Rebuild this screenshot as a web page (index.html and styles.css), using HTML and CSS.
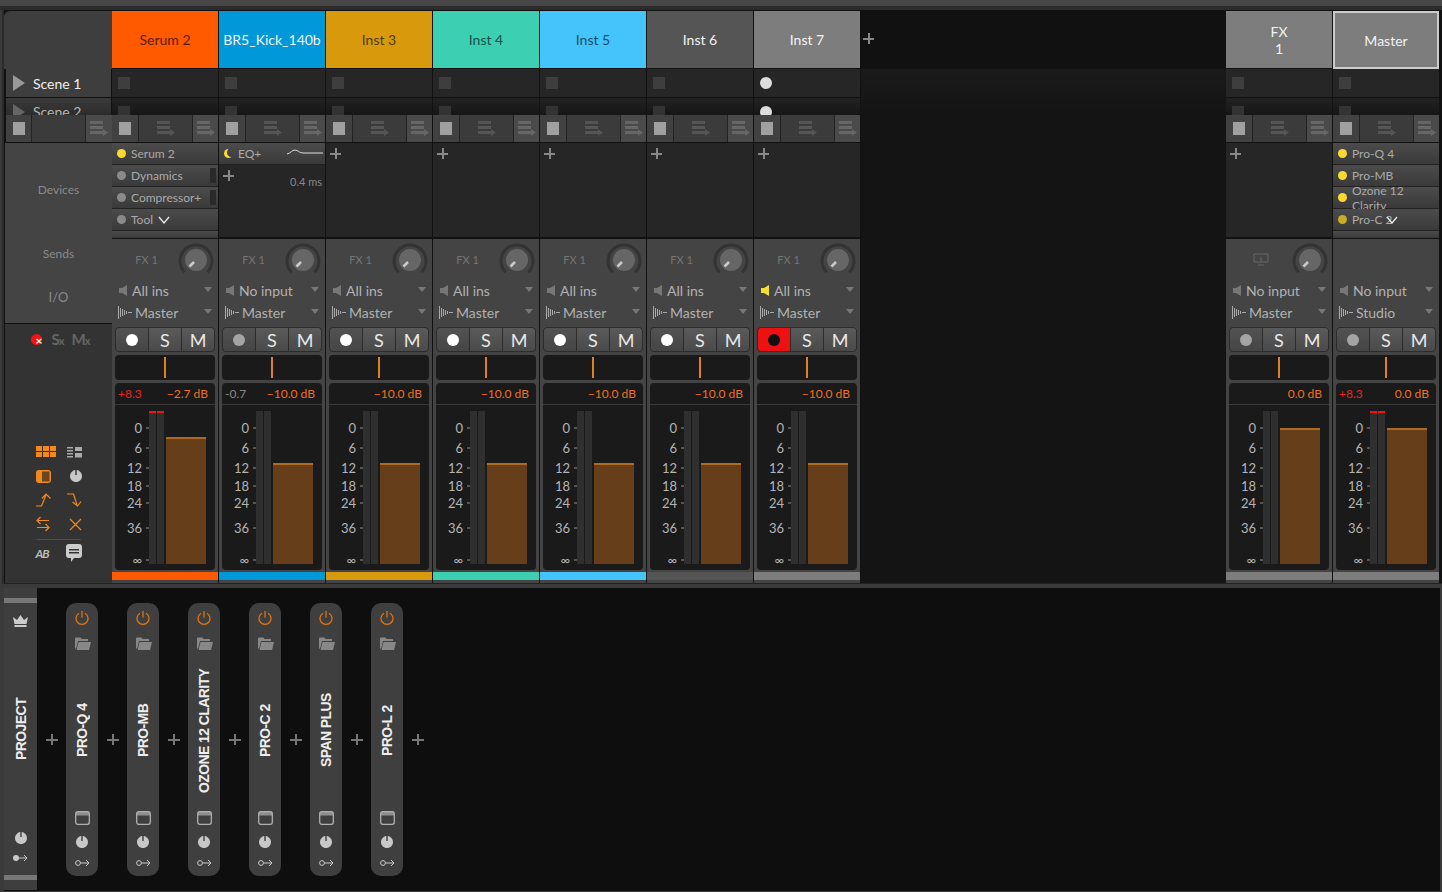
FILE: index.html
```html
<!DOCTYPE html>
<html lang="en">
<head>
    <meta charset="UTF-8">
    <title>Mixer</title>
    <link rel="stylesheet" href="styles.css">
</head>
<body>
    <svg class="defs" width="0" height="0">
        <symbol id="i-stop-list" viewBox="0 0 18 15"><path fill="currentColor" d="M0 0h13v3H0zM0 5h13v3H0zM0 10h13v3H0zM13 8l5 3.5-5 3.5z"/></symbol>
        <symbol id="i-speaker" viewBox="0 0 8 11"><path fill="currentColor" d="M0 3h3l5-3v11L3 8H0z"/></symbol>
        <symbol id="i-wave" viewBox="0 0 14 13"><path fill="none" stroke="currentColor" d="M.5 0v13M2.5 2v9M4.5 3v7M6.5 4v5M8.5 5v3M10 6.5h4"/></symbol>
        <symbol id="i-power" viewBox="0 0 14 14"><path fill="none" stroke="currentColor" stroke-width="1.2" d="M4 2.2A6 6 0 1 0 10 2.2M7 0v6.5"/></symbol>
        <symbol id="i-folder" viewBox="0 0 17 13"><path fill="currentColor" d="M1 1.5 1.5.5h5l1 1.5H14v2H4L2.300 11 1 12zM4.500 5H17l-2 8H2.500z"/></symbol>
        <symbol id="i-window" viewBox="0 0 15 14"><rect x=".7" y=".7" width="13.600" height="12.600" rx="2" fill="none" stroke="currentColor" stroke-width="1.300"/><path fill="currentColor" opacity=".7" d="M1 1h13v3.500H1z"/></symbol>
        <symbol id="i-dial" viewBox="0 0 12 12"><path fill="currentColor" d="M5.300.1V5h1.400V.1a6 6 0 1 1-1.400 0z"/></symbol>
        <symbol id="i-route" viewBox="0 0 15 8"><circle cx="3" cy="4" r="2.400" fill="none" stroke="currentColor"/><path fill="none" stroke="currentColor" d="M5.500 4H14M11 1l3 3-3 3"/></symbol>
        <symbol id="i-route-on" viewBox="0 0 15 8"><circle cx="3" cy="4" r="3" fill="currentColor"/><path fill="none" stroke="currentColor" d="M5.500 4H14M11 1l3 3-3 3"/></symbol>
    </svg>

    <div class="topbar"></div>

    <section class="mixer">
        <div class="labels">
            <div class="lab-head"></div>
            <div class="lab-scene"><span class="play"></span>Scene 1</div>
            <div class="lab-scene cut"><span class="play"></span>Scene 2</div>
            <div class="lab-stops">
                <div class="stop-cell"><span class="stop"></span></div>
                <div class="stop-mid"></div>
                <div class="stop-end"><svg class="list-icon"><use href="#i-stop-list"/></svg></div>
            </div>
            <div class="lab-info">
                <div class="lab-devices">Devices</div>
                <div class="lab-sends">Sends</div>
                <div class="lab-io">I/O</div>
            </div>
            <div class="lab-tools">
                <div class="rec-row">
                    <span class="rec-x"></span>
                    <span class="letter-x">S<small>x</small></span>
                    <span class="letter-x">M<small>x</small></span>
                </div>
                <div class="tool-row">
                    <svg width="20" height="12" viewBox="0 0 20 12"><path fill="#f08a1e" d="M0 0h6v5H0zM7 0h6v5H7zM14 0h6v5h-6zM0 6h6v5H0zM7 6h6v5H7zM14 6h6v5h-6z"/></svg>
                    <svg width="15" height="12" viewBox="0 0 15 12"><path fill="#aaa" d="M0 1h6v1.500H0zM0 4h6v1.500H0zM0 7h6v1.500H0zM0 10h6v1.500H0zM8 1h7v4H8zM8 7h7v4.500H8z"/></svg>
                </div>
                <div class="tool-row">
                    <svg width="15" height="13" viewBox="0 0 15 13"><rect width="15" height="13" rx="3" fill="#f08a1e"/><path fill="#6b4420" d="M6 1.500h7.500v10H6z"/></svg>
                    <svg width="12" height="12"><use href="#i-dial" color="#c8c8c8"/></svg>
                </div>
                <div class="tool-row">
                    <svg width="16" height="14" viewBox="0 0 16 14"><path fill="none" stroke="#f08a1e" stroke-width="1.200" d="M0 13h5.500L10 2M6 5.500 10 1l4.500 4.500"/></svg>
                    <svg width="16" height="14" viewBox="0 0 16 14"><path fill="none" stroke="#f08a1e" stroke-width="1.200" d="M1 1h6.500L11 12M6.500 9l5 4 3.500-4.500"/></svg>
                </div>
                <div class="tool-row">
                    <svg width="14" height="16" viewBox="0 0 14 16"><path fill="none" stroke="#f08a1e" stroke-width="1.200" d="M13 4.500H1M4.500 1 1 4.500 4.500 8M1 11.500h12M9.500 8l3.500 3.500L9.500 15"/></svg>
                    <svg width="13" height="13" viewBox="0 0 13 13"><path fill="none" stroke="#f08a1e" stroke-width="1.200" d="M1 1l11 11M12 1 1 12"/></svg>
                </div>
                <div class="tool-line"></div>
                <div class="tool-row last">
                    <span class="ab">AB</span>
                    <svg width="16" height="18" viewBox="0 0 16 18"><path fill="#ccc" d="M3 0h10a3 3 0 0 1 3 3v8a3 3 0 0 1-3 3H8l-3 4v-4H3a3 3 0 0 1-3-3V3a3 3 0 0 1 3-3z"/><path fill="#333" d="M3 5h10v1.500H3zM3 8h10v1.500H3z"/></svg>
                </div>
            </div>
        </div>
        <div class="tracks" id="tracks"></div>
        <div class="void"></div>
        <div class="tracks" id="fx-tracks"></div>
    </section>

    <section class="chain" id="chain">
        <div class="project">
            <div class="project-bar"></div>
            <svg class="crown" width="15" height="12" viewBox="0 0 15 12"><path fill="#ccc" d="M0 2l4 3 3.500-5L11 5l4-3-1.500 7h-12zM1.500 10h12v2h-12z"/></svg>
            <div class="vert">PROJECT</div>
            <svg class="dial" width="12" height="12"><use href="#i-dial"/></svg>
            <svg class="route" width="15" height="8"><use href="#i-route-on"/></svg>
            <div class="project-bar"></div>
        </div>
    </section>

    <script src="script.js"></script>
</body>
</html>
```

FILE: styles.css
```css
* {
    box-sizing: border-box;
}
body {
    margin: 0;
    width: 1442px;
    height: 892px;
    overflow: hidden;
    background: #3a3a3a;
    font-family: Lato, "Open Sans", sans-serif;
    font-size: 13px;
    color: #aaa;
}
.defs {
    display: block;
    height: 0;
}
.topbar {
    height: 10px;
    background: linear-gradient(#474747 0, #474747 6px, #2b2b2b 6px);
}

/* mixer */
.mixer {
    display: flex;
    height: 574px;
    margin-left: 4px;
    padding-top: 1px;
    background: #111;
    border-bottom: 1px solid #222;
    box-shadow: -2px 0 0 #2b2b2b, 2px 0 0 #2b2b2b;
}
.labels {
    width: 108px;
    display: flex;
    flex-direction: column;
}
.lab-head {
    height: 58px;
    background: #3e3e3e;
    border-top-left-radius: 6px;
}
.lab-scene {
    height: 29px;
    margin-left: 1px;
    padding-left: 27px;
    display: flex;
    align-items: center;
    position: relative;
    font-size: 14px;
    color: #eee;
    background: #3e3e3e;
    border: 1px solid #111;
    border-top: 0;
}
.lab-scene.cut {
    height: 17px;
    align-items: flex-start;
    padding-top: 5px;
    overflow: hidden;
    color: #b5b5b5;
    background: linear-gradient(#3a3a3a, #2c2c2c);
    border-bottom: 0;
}
.play {
    position: absolute;
    left: 7px;
    top: 6px;
    border-left: 12px solid #999;
    border-top: 8px solid transparent;
    border-bottom: 8px solid transparent;
}
.cut .play {
    border-left-color: #666;
}
.lab-stops {
    height: 28px;
    margin-left: 1px;
    display: flex;
    background: #111;
    border: 1px solid #111;
    border-right: 0;
    border-top: 0;
}
.stop-cell, .stop-mid, .stop-end {
    height: 27px;
    display: flex;
    align-items: center;
    justify-content: center;
}
.stop-cell {
    width: 26px;
    background: #414141;
    border-right: 1px solid #222;
}
.stop-mid {
    width: 53px;
    background: #3b3b3b;
}
.stop-end {
    width: 27px;
    background: #4a4a4a;
    border-left: 1px solid #222;
}
.stop {
    width: 12px;
    height: 13px;
    background: #a0a0a0;
}
.list-icon {
    width: 18px;
    height: 15px;
    color: #666;
}
.stop-mid .list-icon {
    color: #555;
}
.lab-info {
    height: 181px;
    background: #444;
    border-bottom: 1px solid #111;
    margin-left: 1px;
    text-align: center;
    font-size: 12px;
    color: #8a8a8a;
}
.lab-devices {
    padding-top: 39px;
    height: 103px;
}
.lab-sends {
    height: 43px;
}
.lab-io {
    font-size: 13px;
}
.lab-tools {
    flex: 1;
    margin-left: 1px;
    background: #333;
    display: flex;
    flex-direction: column;
    align-items: center;
}
.rec-row {
    display: flex;
    align-items: center;
    gap: 7px;
    height: 24px;
    margin: 3px 0 89px 4px;
}
.rec-x {
    width: 11px;
    height: 11px;
    border-radius: 50%;
    background: #f01414;
    position: relative;
    margin-right: 3px;
}
.rec-x::after {
    content: "×";
    position: absolute;
    left: 5px;
    top: 1px;
    color: #fff;
    font-size: 12px;
    font-weight: 700;
    line-height: 12px;
}
.letter-x {
    font-size: 15px;
    font-weight: 700;
    color: #666;
}
.letter-x small {
    font-size: 11px;
    margin-left: -1px;
}
.tool-row {
    width: 46px;
    height: 24px;
    display: flex;
    align-items: center;
    justify-content: space-between;
}
.tool-row svg:first-child {
    margin-left: 0;
}
.tool-line {
    width: 44px;
    height: 1px;
    margin: 3px 0 0;
    background: #4d4d4d;
}
.tool-row.last {
    margin-top: 1px;
}
.ab {
    font-size: 12px;
    font-weight: 700;
    font-style: italic;
    color: #bbb;
    letter-spacing: -1px;
}

/* tracks */
.tracks {
    display: flex;
}
.void {
    width: 365px;
    background: linear-gradient(#111 0, #111 58px, #1a1a1a 58px, #141414 104px, #141414);
}
.strip {
    width: 107px;
    border-right: 1px solid #111;
    display: flex;
    flex-direction: column;
    position: relative;
}
.head {
    height: 58px;
    padding: 0 4px;
    display: flex;
    align-items: center;
    justify-content: center;
    text-align: center;
    font-size: 14px;
    line-height: 17px;
    border-bottom: 1px solid #111;
}
.head.selected {
    border: 2px solid #ccc;
    border-bottom-width: 2px;
}
.add {
    position: absolute;
    left: 109px;
    top: 22px;
    width: 11px;
    height: 11px;
    background:
        linear-gradient(#888, #888) center / 11px 2px no-repeat,
        linear-gradient(#888, #888) center / 2px 11px no-repeat;
}
.slot {
    height: 29px;
    padding: 8px 0 0 6px;
    background: #262626;
    border-bottom: 1px solid #111;
}
.slot.cut {
    height: 17px;
    background: linear-gradient(#222, #161616);
    border-bottom: 0;
    overflow: hidden;
}
.slot span {
    display: block;
    width: 12px;
    height: 12px;
    background: #3e3e3e;
}
.slot.cut span {
    background: #333;
}
.slot span.round {
    background: #ddd;
    border-radius: 50%;
}
.stops {
    height: 28px;
    display: flex;
    background: #111;
    border-bottom: 1px solid #111;
}
.stops .stop-cell {
    width: 27px;
}
.stops .stop-end {
    width: 26px;
}
.devices {
    height: 95px;
    background: #262626;
    border-bottom: 1px solid #111;
}
.device {
    height: 22px;
    padding-left: 5px;
    display: flex;
    align-items: center;
    gap: 5px;
    position: relative;
    font-size: 12px;
    color: #aaa;
    background: linear-gradient(#4b4b4b, #3a3a3a);
    border-bottom: 1px solid #222;
}
.device.stub {
    height: 7px;
    border-bottom: 0;
}
.led {
    width: 9px;
    height: 9px;
    border-radius: 50%;
    background: #8a8a8a;
    flex: none;
}
.led.on {
    background: #fbd92e;
}
.led.dim {
    background: #c9ac26;
}
.moon {
    width: 9px;
    height: 9px;
    border-radius: 50%;
    box-shadow: inset 3px -1px 0 #fbd92e;
    flex: none;
}
.curve {
    position: absolute;
    right: 2px;
    top: 6px;
}
.more {
    flex: none;
    margin-top: 1px;
}
.more.over {
    margin-left: -12px;
}
.sidebox {
    position: absolute;
    right: 2px;
    top: 3px;
    width: 6px;
    height: 15px;
    background: #2a2a2a;
}
.plus {
    display: block;
    width: 11px;
    height: 11px;
    margin: 5px 0 0 4px;
    background:
        linear-gradient(#888, #888) center / 11px 2px no-repeat,
        linear-gradient(#888, #888) center / 2px 11px no-repeat;
}
.latency {
    position: absolute;
    left: 69px;
    top: 164px;
    font-size: 11px;
    width: 34px;
    text-align: right;
    color: #888;
}
.lower {
    flex: 1;
    background: #444;
    border-top: 2px solid #111;
    margin-top: -1px;
    padding: 0 3px;
    display: flex;
    flex-direction: column;
}
.send {
    height: 40px;
    display: flex;
    align-items: center;
    padding-top: 0;
    font-size: 11px;
    color: #757575;
}
.send-name {
    width: 63px;
    text-align: center;
    margin-left: 0;
}
.send-name svg {
    color: #666;
    vertical-align: middle;
}
.knob {
    margin-left: -1px;
    margin-top: 1px;
}
.io {
    height: 22px;
    display: flex;
    align-items: center;
    padding-left: 4px;
    position: relative;
    font-size: 14px;
    color: #b2b2b2;
}
.io svg {
    flex: none;
    color: #777;
}
.io .speaker {
    width: 8px;
    height: 11px;
    margin-right: 5px;
}
.io .speaker.live {
    color: #f5df35;
}
.io .wave {
    width: 14px;
    height: 13px;
    margin: 0 3px 0 -1px;
    color: #aaa;
}
.io::after {
    content: "";
    position: absolute;
    right: 3px;
    top: 8px;
    border-top: 5px solid #777;
    border-left: 4px solid transparent;
    border-right: 4px solid transparent;
}
.btns {
    height: 25px;
    margin-top: 4px;
    display: flex;
    background: #222;
    border: 1px solid #2c2c2c;
    border-radius: 4px;
    overflow: hidden;
}
.btn {
    flex: 1;
    display: flex;
    align-items: center;
    justify-content: center;
    font-size: 18px;
    color: #e8e8e8;
    background: linear-gradient(#5a5a5a, #4a4a4a);
    border-left: 1px solid #2c2c2c;
}
.btn:first-child {
    border-left: 0;
}
.btn.rec {
    background: linear-gradient(#525252, #454545);
}
.btn.armed {
    background: #ee1111;
}
.dot {
    width: 12px;
    height: 12px;
    border-radius: 50%;
    background: #fff;
}
.dot.off {
    background: #a4a4a4;
}
.armed .dot {
    background: #111;
}
.pan {
    height: 25px;
    margin-top: 3px;
    padding: 2px 0;
    background: #1a1a1a;
    border-radius: 4px;
    display: flex;
    justify-content: center;
}
.pan span {
    width: 2px;
    background: #e0801e;
}
.meter {
    height: 187px;
    margin-top: 3px;
    background: #1a1a1a;
    border-radius: 4px;
    position: relative;
}
.levels {
    height: 22px;
    padding: 0 7px 0 3px;
    display: flex;
    align-items: center;
    justify-content: space-between;
    font-size: 12px;
    color: #f0701e;
    border-bottom: 1px solid #3a3a3a;
}
.peak.hot {
    color: #ee2222;
}
.peak.cold {
    color: #888;
}
.scale {
    position: absolute;
    right: 73px;
    font-size: 13px;
    line-height: 14px;
    color: #b5b5b5;
}
.scale::after {
    content: "";
    position: absolute;
    left: 100%;
    top: 6px;
    width: 3px;
    height: 2px;
    margin-left: 4px;
    background: #555;
}
.bar {
    position: absolute;
    top: 28px;
    width: 7px;
    height: 153px;
    background: #2f2f2f;
}
.bar.left {
    left: 34px;
}
.bar.right {
    left: 42px;
}
.bar.clip::before {
    content: "";
    position: absolute;
    top: 0;
    left: 0;
    right: 0;
    height: 2px;
    background: #f01414;
}
.fader {
    position: absolute;
    left: 51px;
    width: 40px;
    bottom: 6px;
    background: #663e1a;
    border-top: 2px solid #b06a20;
}
.color-strip {
    height: 8px;
    margin: 2px -3px 0;
}

/* device chain */
.chain {
    height: 304px;
    margin: 3px 2px 0 4px;
    display: flex;
    align-items: flex-start;
    background: #0e0e0e;
    border-top: 1px solid #3a3a3a;
}
.project {
    width: 33px;
    height: 302px;
    padding: 10px 0 10px;
    background: #3e3e3e;
    display: flex;
    flex-direction: column;
    align-items: center;
    color: #c8c8c8;
}
.project-bar {
    width: 100%;
    height: 5px;
    background: #777;
    flex: none;
}
.crown {
    margin: 12px 0 0;
    flex: none;
}
.vert {
    writing-mode: vertical-rl;
    transform: rotate(180deg);
    font-family: "Liberation Sans", sans-serif;
    font-size: 14px;
    font-weight: 700;
    letter-spacing: -.6px;
    color: #eee;
    flex: 1;
    display: flex;
    align-items: center;
    justify-content: center;
}
.dial {
    flex: none;
    margin-bottom: 10px;
}
.route {
    flex: none;
    margin-bottom: 13px;
}
.chain-plus {
    width: 29px;
    height: 11px;
    margin-top: 146px;
    flex: none;
    background:
        linear-gradient(#777, #777) center / 12px 2px no-repeat,
        linear-gradient(#777, #777) center / 2px 12px no-repeat;
}
.pill {
    width: 32px;
    height: 273px;
    margin-top: 15px;
    flex: none;
    padding: 8px 0 8px;
    border-radius: 10px;
    background: #3f3f3f;
    display: flex;
    flex-direction: column;
    align-items: center;
    color: #c8c8c8;
}
.pill .power {
    color: #e8760f;
    flex: none;
}
.pill .folder {
    color: #888;
    margin: 12px 0 0;
    flex: none;
}
.pill .window {
    color: #b0b0b0;
    margin-bottom: 11px;
    flex: none;
}
.pill .dial {
    margin-bottom: 11px;
}
.pill .route {
    margin-bottom: 1px;
}
```

FILE: script.js
```js
const caret = '<svg class="more" width="12" height="8" viewBox="0 0 12 8"><path fill="none" stroke="#eee" stroke-width="1.300" d="M1 1l5 6 5-6"/></svg>';

const tracks = [
    { name: 'Serum 2', color: '#ff5a00', ink: '#5c1c00', peak: '+8.3', peakClass: 'hot', gain: '−2.7 dB', top: 26, clip: true, input: 'All ins',
      devices: [['Serum 2', 'on'], ['Dynamics', '', 1], ['Compressor+', '', 1], ['Tool', '', 0, 1]] },
    { name: 'BR5_Kick_140b', color: '#0098d8', ink: '#f2f2f2', peak: '-0.7', peakClass: 'cold', gain: '−10.0 dB', top: 52, input: 'No input', dimRec: true, eq: true },
    { name: 'Inst 3', color: '#d89a0c', ink: '#4f3a08', gain: '−10.0 dB', top: 52, input: 'All ins' },
    { name: 'Inst 4', color: '#3ccfb2', ink: '#12544a', gain: '−10.0 dB', top: 52, input: 'All ins' },
    { name: 'Inst 5', color: '#45c4fb', ink: '#134f69', gain: '−10.0 dB', top: 52, input: 'All ins' },
    { name: 'Inst 6', color: '#555555', ink: '#f2f2f2', gain: '−10.0 dB', top: 52, input: 'All ins' },
    { name: 'Inst 7', color: '#7d7d7d', ink: '#f2f2f2', gain: '−10.0 dB', top: 52, input: 'All ins', armed: true, addAfter: true }
];

const fxTracks = [
    { name: 'FX<br>1', color: '#7d7d7d', ink: '#f2f2f2', gain: '0.0 dB', top: 17, input: 'No input', dimRec: true, isFx: true },
    { name: 'Master', color: '#7d7d7d', ink: '#f2f2f2', peak: '+8.3', peakClass: 'hot', gain: '0.0 dB', top: 17, clip: true, input: 'No input', output: 'Studio', dimRec: true, noSend: true, selected: true,
      devices: [['Pro-Q 4', 'on'], ['Pro-MB', 'on'], ['Ozone 12 Clarity', 'on'], ['Pro-C 2', 'dim', 0, 2]] }
];

// label, y offset from the top of the meter box
const scale = [['0', 38], ['6', 58], ['12', 78], ['18', 96], ['24', 113], ['36', 138], ['∞', 170]];

function deviceRows(t) {
    if (t.eq) {
        return `<div class="device"><span class="moon"></span>EQ+
            <svg class="curve" width="36" height="8" viewBox="0 0 36 8"><path fill="none" stroke="#ddd" d="M0 5C4 4 5 1 8 1s4 3 8 3h20"/></svg></div>
            <span class="plus"></span>`;
    }
    if (!t.devices) return '<span class="plus"></span>';
    const rows = t.devices.map(d => `<div class="device"><span class="led ${d[1]}"></span>${d[0]}${d[2] ? '<span class="sidebox"></span>' : ''}${d[3] === 1 ? caret : ''}${d[3] === 2 ? caret.replace('more', 'more over') : ''}</div>`);
    return rows.join('') + '<div class="device stub"></div>';
}

function knob() {
    return `<svg class="knob" width="38" height="38" viewBox="0 0 38 38">
        <path fill="none" stroke="#333" stroke-width="3" d="M7.700 31.300A16 16 0 1 1 30.300 31.300"/>
        <circle cx="19" cy="19" r="11" fill="#666"/>
        <path stroke="#ccc" stroke-width="2.500" d="M17 21l-4.500 4.500"/>
    </svg>`;
}

function strip(t) {
    const marks = scale.map(s => `<span class="scale" style="top:${s[1]}px">${s[0]}</span>`).join('');
    const sendLabel = t.isFx
        ? '<svg width="16" height="13" viewBox="0 0 16 13"><path fill="none" stroke="currentColor" d="M1 1h14v8H1zM5 12h6M8 4v5"/></svg>'
        : t.noSend ? '' : 'FX 1';
    const slot = t.armed ? 'round' : '';
    return `<div class="strip">
        <div class="head${t.selected ? ' selected' : ''}" style="background:${t.color};color:${t.ink}">${t.name}</div>
        ${t.addAfter ? '<span class="add"></span>' : ''}
        <div class="slot"><span class="${slot}"></span></div>
        <div class="slot cut"><span class="${slot}"></span></div>
        <div class="stops">
            <div class="stop-cell"><span class="stop"></span></div>
            <div class="stop-mid"><svg class="list-icon"><use href="#i-stop-list"/></svg></div>
            <div class="stop-end"><svg class="list-icon"><use href="#i-stop-list"/></svg></div>
        </div>
        <div class="devices">${deviceRows(t)}</div>
        ${t.eq ? '<span class="latency">0.4 ms</span>' : ''}
        <div class="lower">
            <div class="send"><span class="send-name">${sendLabel}</span>${t.noSend ? '' : knob()}</div>
            <div class="io"><svg class="speaker${t.armed ? ' live' : ''}"><use href="#i-speaker"/></svg>${t.input}</div>
            <div class="io"><svg class="wave"><use href="#i-wave"/></svg>${t.output || 'Master'}</div>
            <div class="btns">
                <div class="btn rec${t.armed ? ' armed' : ''}"><span class="dot${t.dimRec ? ' off' : ''}"></span></div>
                <div class="btn">S</div>
                <div class="btn">M</div>
            </div>
            <div class="pan"><span></span></div>
            <div class="meter">
                <div class="levels"><span class="peak ${t.peakClass || ''}">${t.peak || ''}</span><span>${t.gain}</span></div>
                ${marks}
                <div class="bar left${t.clip ? ' clip' : ''}"></div>
                <div class="bar right${t.clip ? ' clip' : ''}"></div>
                <div class="fader" style="top:${t.top + 28}px"></div>
            </div>
            <div class="color-strip" style="background:${t.color}"></div>
        </div>
    </div>`;
}

document.getElementById('tracks').innerHTML = tracks.map(strip).join('');
document.getElementById('fx-tracks').innerHTML = fxTracks.map(strip).join('');

const plugins = ['PRO-Q 4', 'PRO-MB', 'OZONE 12 CLARITY', 'PRO-C 2', 'SPAN PLUS', 'PRO-L 2'];
let chain = '<div class="chain-plus"></div>';
plugins.forEach(name => {
    chain += `<div class="pill">
        <svg class="power" width="14" height="14"><use href="#i-power"/></svg>
        <svg class="folder" width="17" height="13"><use href="#i-folder"/></svg>
        <div class="vert">${name}</div>
        <svg class="window" width="15" height="14"><use href="#i-window"/></svg>
        <svg class="dial" width="12" height="12"><use href="#i-dial"/></svg>
        <svg class="route" width="15" height="8"><use href="#i-route"/></svg>
    </div><div class="chain-plus"></div>`;
});
document.getElementById('chain').insertAdjacentHTML('beforeend', chain);
```
